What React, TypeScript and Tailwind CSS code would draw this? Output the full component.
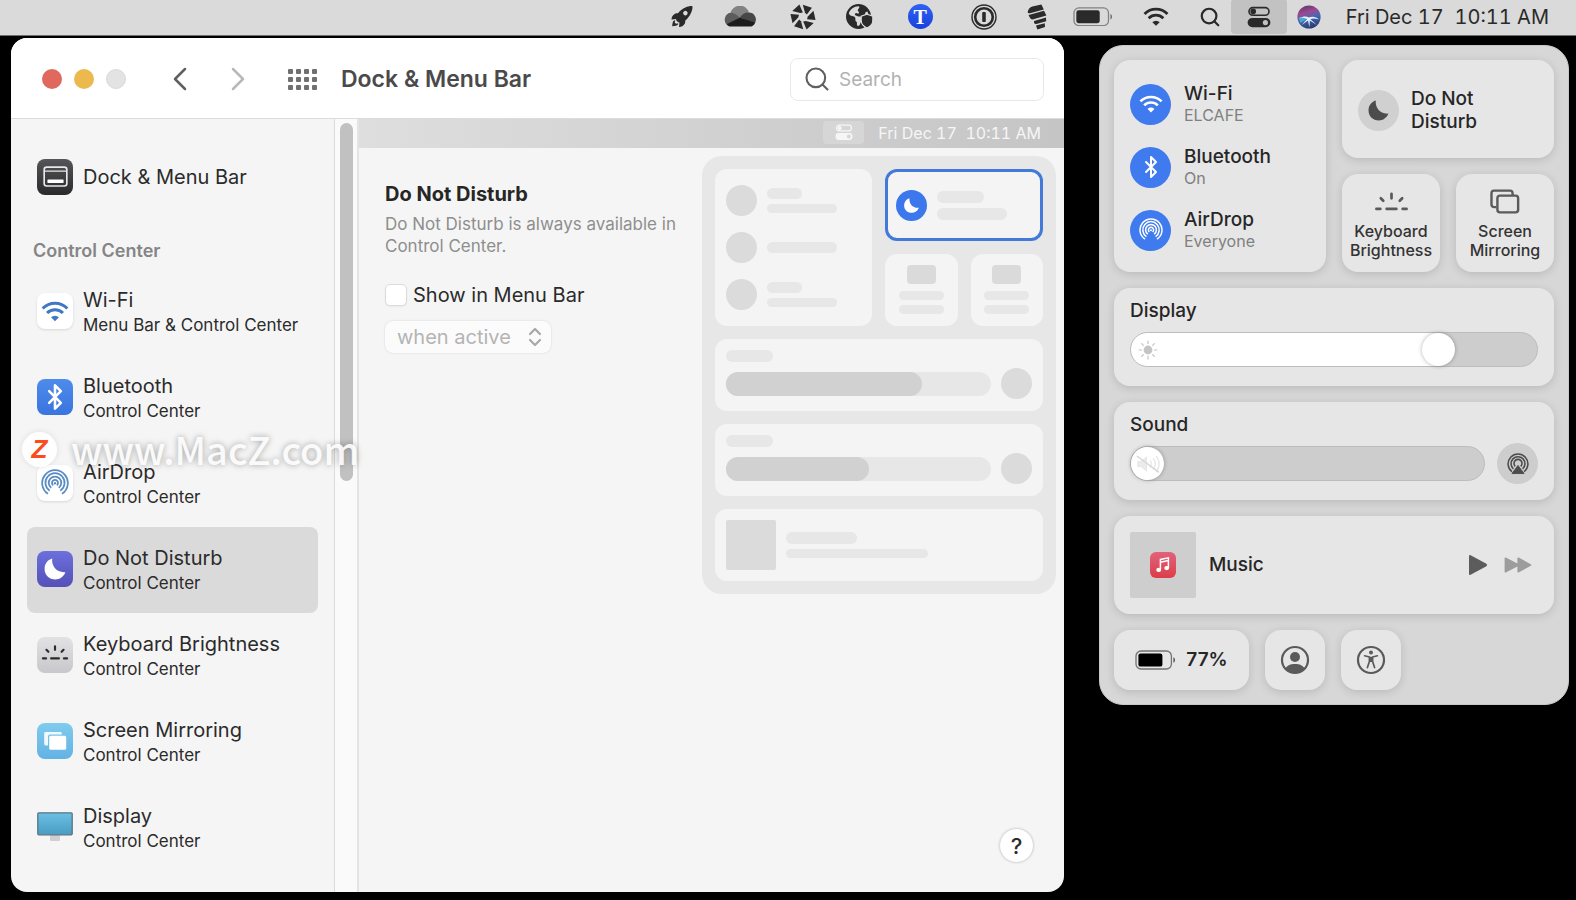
import { type ReactNode, useId, useState } from "react";
import { Bluetooth, ChevronLeft, ChevronRight, ChevronsUpDown, Search } from "lucide-react";
import { FaEarthAmericas } from "react-icons/fa6";
import { IoRocketSharp } from "react-icons/io5";
import { clsx } from "clsx";

interface IconProps {
  className?: string;
}

function WifiIcon({ className }: IconProps) {
  return (
    <svg viewBox="0 0 24 18" className={className} fill="none" stroke="currentColor" strokeWidth="2.6">
      <path d="M1.4 6.4A15 15 0 0 1 22.6 6.4" />
      <path d="M5.2 10.3A9.6 9.6 0 0 1 18.8 10.3" />
      <path d="M12 17.4L8.6 14A4.8 4.8 0 0 1 15.4 14Z" fill="currentColor" stroke="none" />
    </svg>
  );
}

function AirDropIcon({ className }: IconProps) {
  return (
    <svg viewBox="0 0 24 24" className={className} fill="none" stroke="currentColor" strokeWidth="1.5">
      <path d="M6 21.2A11 11 0 1 1 18 21.2" />
      <path d="M7.4 18.6A8.2 8.2 0 1 1 16.6 18.6" />
      <path d="M8.8 16.2A5.4 5.4 0 1 1 15.2 16.2" />
      <path d="M10.4 14A2.6 2.6 0 1 1 13.6 14" />
      <circle cx="12" cy="12.2" r="1" fill="currentColor" stroke="none" />
    </svg>
  );
}

function AirPlayIcon({ className }: IconProps) {
  return (
    <svg viewBox="0 0 24 24" className={className} fill="none" stroke="currentColor" strokeWidth="1.7">
      <path d="M5.4 20.4A10.8 10.8 0 1 1 18.6 20.4" />
      <path d="M7 17.4A7.6 7.6 0 1 1 17 17.4" />
      <path d="M9 14.6A4.4 4.4 0 1 1 15 14.6" />
      <path d="M12 13.6L18.6 22.4H5.4Z" fill="currentColor" strokeLinejoin="round" strokeWidth="1" />
    </svg>
  );
}

function MoonIcon({ className }: IconProps) {
  return (
    <svg viewBox="0 0 24 24" className={className} fill="currentColor">
      <path d="M9.2 1.6C8.2 8.8 13.6 16 22.4 15.2C20.6 19.8 16.8 22.4 12.3 22.4C6.2 22.4 1.6 17.8 1.6 11.9C1.6 7 4.5 3 9.2 1.6Z" />
    </svg>
  );
}

function KeyboardLightIcon({ className }: IconProps) {
  return (
    <svg viewBox="0 0 36 22" className={className} stroke="currentColor" strokeWidth="2.8" strokeLinecap="round">
      <path d="M2.5 18.5H6.5M13 18.5H23M29.5 18.5H33.5M18 3V7.5M7 7.5L9.5 10M29 7.5L26.5 10" />
    </svg>
  );
}

function MirrorIcon({ className }: IconProps) {
  return (
    <svg viewBox="0 0 32 27" className={className} fill="none" stroke="currentColor" strokeWidth="2.6">
      <path d="M7 19.6H4.4A2.8 2.8 0 0 1 1.6 16.8V4.6A2.8 2.8 0 0 1 4.4 1.8H21.6A2.8 2.8 0 0 1 24.4 4.6V6.6" />
      <rect x="8" y="7.2" width="22.4" height="18" rx="2.8" />
    </svg>
  );
}

function TogglesIcon({ className }: IconProps) {
  return (
    <svg viewBox="0 0 24 22" className={className}>
      <rect x="2" y="1.6" width="20" height="7.6" rx="3.8" fill="none" stroke="currentColor" strokeWidth="1.6" />
      <circle cx="6.2" cy="5.4" r="2.8" fill="currentColor" />
      <path
        d="M5.2 12H18.8A4.6 4.6 0 0 1 18.8 21.2H5.2A4.6 4.6 0 0 1 5.2 12ZM18.4 14A2.6 2.6 0 1 0 18.4 19.2A2.6 2.6 0 0 0 18.4 14Z"
        fill="currentColor"
        fillRule="evenodd"
      />
    </svg>
  );
}

function BatteryIcon({ className }: IconProps) {
  return (
    <svg viewBox="0 0 41 20" className={className}>
      <rect x="1" y="1" width="35.4" height="18" rx="5" fill="none" stroke="currentColor" strokeOpacity="0.5" strokeWidth="1.3" />
      <rect x="3.4" y="3.4" width="24" height="13.2" rx="2.2" fill="currentColor" />
      <path d="M38.4 7.2C40.6 8 40.6 12 38.4 12.8Z" fill="currentColor" fillOpacity="0.6" />
    </svg>
  );
}

function CloudIcon({ className }: IconProps) {
  return (
    <svg viewBox="0 0 32 21" className={className}>
      <path d="M6.5 6.8A9.6 9.6 0 0 1 25 6.6C21 7 18.6 9.6 15.6 11.4C12 8.6 9.4 7.4 6.5 6.8Z" fill="#828282" />
      <path d="M6.4 6.8C10.8 6.8 13.2 9.4 16 11.6L3 18.8A7 7 0 0 1 6.4 6.8Z" fill="#5c5c5c" />
      <path d="M24.6 6.6A7 7 0 0 1 31 17C27 15 21 13.6 15.6 11.4C18.6 8.4 21 6.4 24.6 6.6Z" fill="#474747" />
      <path d="M2.6 18.2L15.8 11.4L31.2 16.4C30.4 19 28.4 20.6 25.4 20.6H7C5.2 20.6 3.6 19.8 2.6 18.2Z" fill="#1c1c1c" />
    </svg>
  );
}

function PinwheelIcon({ className }: IconProps) {
  return (
    <svg viewBox="0 0 26 26" className={className} fill="currentColor">
      {[20, 80, 140, 200, 260, 320].map((angle) => (
        <path key={angle} d="M8.6 1.6L18.2 1.2L15.8 9.4L13.4 8.2Z" transform={`rotate(${angle} 13 13)`} />
      ))}
    </svg>
  );
}

function GlobeShieldIcon({ className }: IconProps) {
  return (
    <span className={clsx("relative", className)}>
      <FaEarthAmericas className="size-[25px]" />
      <svg viewBox="0 0 14 16" className="absolute right-0 bottom-0 h-4 w-[14px]">
        <path
          d="M7 1.2L12.8 3.2V7.6C12.8 11 10.4 13.6 7 15C3.6 13.6 1.2 11 1.2 7.6V3.2Z"
          fill="#2a2a2a"
          stroke="#dadada"
          strokeWidth="1.2"
        />
      </svg>
    </span>
  );
}

function KeyholeIcon({ className }: IconProps) {
  return (
    <svg viewBox="0 0 26 26" className={className} fill="none" stroke="currentColor">
      <circle cx="13" cy="13" r="12" strokeWidth="1.4" />
      <circle cx="13" cy="13" r="8.8" strokeWidth="2.6" />
      <rect x="11.2" y="8" width="3.6" height="10" rx="1" fill="currentColor" stroke="none" />
    </svg>
  );
}

function StripesIcon({ className }: IconProps) {
  return (
    <svg viewBox="0 0 20 26" className={className} fill="currentColor">
      <path d="M0.6 8.2Q1.4 3.4 5.4 2.4L14.4 0.4L16.8 5.4L3 9.2Q1 9.6 0.6 8.2Z" />
      <path d="M1.6 11L17 6.8L19.4 11.6L5.6 15.6Q3.4 15.8 1.6 11Z" />
      <path d="M7 17L19 13.4L19.2 17.2L9.4 20Q6.6 20.4 7 17Z" />
      <path d="M9 21.6L17.8 19.2L18 23L10.4 25.4Z" />
    </svg>
  );
}

function SiriIcon({ className }: IconProps) {
  const id = useId();
  return (
    <svg viewBox="0 0 24 24" className={className}>
      <defs>
        <linearGradient id={id} x1="0.3" y1="0" x2="0.6" y2="1">
          <stop offset="0" stopColor="#5a3a78" />
          <stop offset="0.3" stopColor="#a0488c" />
          <stop offset="0.55" stopColor="#4668b4" />
          <stop offset="1" stopColor="#28386c" />
        </linearGradient>
      </defs>
      <circle cx="12" cy="12" r="11.6" fill={`url(#${id})`} />
      <path d="M2 13.4C6 11.4 9 11 12 12.6C15 11 19 11.6 22 14.4C18 13.4 15 13.4 13.4 14.2L20 20L12.8 15.4L12.4 22.6L11 15.6L4.6 20L10.2 14C8 13 5 13 2 13.4Z" fill="#e6f2ff" />
      <path d="M1.6 13C4 12 7 12.6 9.8 14.2L3.6 18Z" fill="#4ab8d8" opacity="0.8" />
    </svg>
  );
}

function DockTileIcon() {
  return (
    <svg viewBox="0 0 26 22" className="w-[25px]" fill="none">
      <rect x="1.2" y="1.2" width="23.6" height="19.6" rx="2.6" stroke="#e8e8e8" strokeWidth="1.7" />
      <path d="M2 5.4H24" stroke="#e8e8e8" strokeWidth="1.4" />
      <rect x="4.6" y="14" width="16.8" height="3.8" rx="0.6" fill="#fff" />
    </svg>
  );
}

function DisplayTileIcon() {
  const id = useId();
  return (
    <svg viewBox="0 0 36 36" className="size-9">
      <defs>
        <linearGradient id={id} x1="0" y1="0" x2="0" y2="1">
          <stop offset="0" stopColor="#6cc0e4" />
          <stop offset="1" stopColor="#4a9cc2" />
        </linearGradient>
      </defs>
      <rect x="13" y="26" width="10" height="6" rx="1" fill="#cfcfcf" />
      <rect x="0.8" y="3.8" width="34.4" height="22" rx="1" fill={`url(#${id})`} stroke="#5b7480" strokeWidth="1.3" />
    </svg>
  );
}

interface SidebarEntry {
  name: string;
  where?: string;
  tile: string;
  icon: ReactNode;
}

const DOCK_ENTRY: SidebarEntry = {
  name: "Dock & Menu Bar",
  tile: "bg-linear-to-b from-[#56565a] to-[#2a2a2c]",
  icon: <DockTileIcon />,
};

const MODULES: SidebarEntry[] = [
  {
    name: "Wi-Fi",
    where: "Menu Bar & Control Center",
    tile: "bg-white shadow-sm text-[#4078c4]",
    icon: <WifiIcon className="w-7" />,
  },
  {
    name: "Bluetooth",
    where: "Control Center",
    tile: "bg-linear-to-b from-[#4f8bea] to-[#3a74e0] text-white",
    icon: <Bluetooth className="size-7" strokeWidth={2.2} />,
  },
  {
    name: "AirDrop",
    where: "Control Center",
    tile: "bg-white shadow-sm text-[#5a8cc4]",
    icon: <AirDropIcon className="size-7" />,
  },
  {
    name: "Do Not Disturb",
    where: "Control Center",
    tile: "bg-linear-to-b from-[#6c70dc] to-[#5450b8] text-white",
    icon: <MoonIcon className="size-6" />,
  },
  {
    name: "Keyboard Brightness",
    where: "Control Center",
    tile: "bg-linear-to-b from-[#e2e2e4] to-[#c8c8cc] text-[#2c2c2c]",
    icon: <KeyboardLightIcon className="mb-1 w-7" />,
  },
  {
    name: "Screen Mirroring",
    where: "Control Center",
    tile: "bg-linear-to-b from-[#80ccee] to-[#62b2e4] text-white",
    icon: (
      <svg viewBox="0 0 24 20" className="w-6">
        <path d="M5 14.4H2.6A1.4 1.4 0 0 1 1.2 13V2.4A1.4 1.4 0 0 1 2.6 1H17.4A1.4 1.4 0 0 1 18.8 2.4V3.4H7A2 2 0 0 0 5 5.4Z" fill="#fff" fillOpacity="0.9" />
        <rect x="6.2" y="4.8" width="17" height="14" rx="1.6" fill="#fff" />
      </svg>
    ),
  },
  { name: "Display", where: "Control Center", tile: "", icon: <DisplayTileIcon /> },
];

const CARD = "rounded-2xl bg-[#e6e6e6] shadow-[0_2px_10px_rgba(0,0,0,0.14)]";

function SidebarRow({ entry, selected }: { entry: SidebarEntry; selected?: boolean }) {
  return (
    <button
      type="button"
      className={clsx(
        "flex h-[86px] w-full items-center gap-[10px] rounded-lg pt-0.5 pl-[10px] text-left text-[#2b2b2b]",
        selected && "bg-[#dadada]",
      )}
    >
      <span
        className={clsx(
          "flex size-9 shrink-0 items-center justify-center rounded-lg",
          entry.where && "mb-1",
          entry.tile,
        )}
      >
        {entry.icon}
      </span>
      <span className="flex flex-col whitespace-nowrap">
        <span className="text-[20px] leading-[25px]">{entry.name}</span>
        {entry.where && <span className="text-[17px] leading-[25px]">{entry.where}</span>}
      </span>
    </button>
  );
}

function MenuBar() {
  return (
    <header className="flex h-9 items-center justify-end border-b border-[#6e6e6e] bg-[#dadada] pr-[27px] pb-0.5 text-[#2a2a2a]">
      <IoRocketSharp className="h-[25px] w-6" />
      <CloudIcon className="ml-[30px] w-8" />
      <PinwheelIcon className="ml-[34px] size-[26px]" />
      <GlobeShieldIcon className="ml-[30px] w-7" />
      <span className="ml-[34px] flex size-[25px] items-center justify-center rounded-full bg-linear-to-b from-[#2f62f4] to-[#1a40dc] font-['Liberation_Serif'] text-[20px] leading-none font-bold text-white">
        T
      </span>
      <KeyholeIcon className="ml-[38px] size-[26px]" />
      <StripesIcon className="ml-[30px] w-5" />
      <BatteryIcon className="ml-[26px] w-10" />
      <WifiIcon className="ml-[30px] w-[26px]" />
      <Search className="ml-[30px] size-[22px]" strokeWidth={2.4} />
      <button type="button" aria-label="Control Center" className="ml-[10px] flex h-[35px] w-14 items-center justify-center rounded bg-[#c2c2c2]">
        <TogglesIcon className="w-6" />
      </button>
      <SiriIcon className="ml-[10px] size-6" />
      <span className="ml-[25px] text-[20px] whitespace-pre tabular-nums">Fri Dec 17  10:11 AM</span>
    </header>
  );
}

function TitleBar() {
  return (
    <div className="flex h-[81px] items-center border-b border-[#dcdcdc] bg-white pt-0.5 pr-5 pl-[31px]">
      <div className="flex gap-3">
        <button type="button" aria-label="Close" className="size-5 rounded-full bg-[#e0695d]" />
        <button type="button" aria-label="Minimize" className="size-5 rounded-full bg-[#ecb94e]" />
        <button type="button" aria-label="Zoom" className="size-5 rounded-full border border-[#dadada] bg-[#e3e3e3]" />
      </div>
      <button type="button" aria-label="Back" className="ml-[34px] text-[#606060]">
        <ChevronLeft className="size-10" strokeWidth={1.5} />
      </button>
      <button type="button" aria-label="Forward" className="ml-[18px] text-[#b8b8b8]">
        <ChevronRight className="size-10" strokeWidth={1.5} />
      </button>
      <button type="button" aria-label="Show All" className="ml-[30px] grid grid-cols-4 gap-[3px]">
        {Array.from({ length: 12 }, (_, i) => (
          <span key={i} className="size-[5px] rounded-[1px] bg-[#707070]" />
        ))}
      </button>
      <h1 className="ml-6 text-[23px] font-semibold whitespace-nowrap text-[#4a4a4a]">Dock &amp; Menu Bar</h1>
      <div className="ml-auto flex h-[43px] w-[254px] items-center gap-2 rounded-lg border border-[#e8e8e8] px-3 text-[#606060]">
        <Search className="size-7 shrink-0" strokeWidth={1.8} />
        <input
          type="search"
          aria-label="Search"
          placeholder="Search"
          className="h-full w-full min-w-0 bg-transparent text-[19px] outline-none placeholder:text-[#b2b2b2]"
        />
      </div>
    </div>
  );
}

function Sidebar() {
  return (
    <>
      <nav className="w-[323px] shrink-0 px-4 pt-[14px]">
        <SidebarRow entry={DOCK_ENTRY} />
        <h2 className="flex h-[50px] items-center pt-3 pl-[6px] text-[18px] font-semibold text-[#858585]">Control Center</h2>
        {MODULES.map((entry) => (
          <SidebarRow key={entry.name} entry={entry} selected={entry.name === "Do Not Disturb"} />
        ))}
      </nav>
      <div className="w-[25px] shrink-0 border-r-2 border-l border-r-[#e4e4e4] border-l-[#dcdcdc] bg-[#fafafa] pt-1 pl-[5px]">
        <div className="h-[358px] w-[13px] rounded-full bg-[#c1c1c1]" />
      </div>
    </>
  );
}

/* Placeholder line inside the layout preview */
function Bar({ className }: IconProps) {
  return <div className={clsx("rounded-full bg-[#e7e7e7]", className)} />;
}

function PreviewSlider({ level }: { level: number }) {
  return (
    <div className="h-[72px] rounded-xl bg-[#f4f4f4] px-[11px] pt-[11px]">
      <Bar className="h-3 w-[47px]" />
      <div className="mt-[6px] flex items-center gap-[10px]">
        <div className="h-6 flex-1 rounded-full bg-[#e7e7e7]">
          <div className="h-full rounded-full bg-[#d1d1d1]" style={{ width: `${level}%` }} />
        </div>
        <div className="size-[31px] rounded-full bg-[#dbdbdb]" />
      </div>
    </div>
  );
}

function PreviewTile() {
  return (
    <div className="flex h-[72px] flex-1 flex-col items-center rounded-xl bg-[#f4f4f4] pt-[11px]">
      <div className="h-[19px] w-[29px] rounded bg-[#dadada]" />
      <Bar className="mt-[7px] h-[9px] w-[45px]" />
      <Bar className="mt-[5px] h-[9px] w-[45px]" />
    </div>
  );
}

function LayoutPreview() {
  return (
    <div className="flex w-[354px] shrink-0 flex-col gap-[13px] rounded-[20px] bg-[#e7e7e7] p-[13px]">
      <div className="flex gap-[13px]">
        <div className="flex flex-1 flex-col justify-center gap-4 rounded-xl bg-[#f4f4f4] pl-[11px]">
          {[true, false, true].map((twoLines, i) => (
            <div key={i} className="flex items-center gap-[10px]">
              <div className="size-[31px] rounded-full bg-[#dbdbdb]" />
              <div className="flex flex-col gap-[5px]">
                {twoLines && <Bar className="h-[11px] w-[35px]" />}
                <Bar className={clsx("w-[70px]", twoLines ? "h-[9px]" : "h-[11px]")} />
              </div>
            </div>
          ))}
        </div>
        <div className="flex w-[158px] flex-col gap-[13px]">
          <div className="flex h-[72px] items-center gap-[10px] rounded-xl border-3 border-[#4379d8] bg-[#f4f4f4] pl-2">
            <div className="flex size-[31px] items-center justify-center rounded-full bg-[#3c78ec] text-white">
              <MoonIcon className="size-[17px]" />
            </div>
            <div className="flex flex-col gap-[5px]">
              <Bar className="h-3 w-[47px]" />
              <Bar className="h-3 w-[70px]" />
            </div>
          </div>
          <div className="flex gap-[13px]">
            <PreviewTile />
            <PreviewTile />
          </div>
        </div>
      </div>
      <PreviewSlider level={74} />
      <PreviewSlider level={54} />
      <div className="flex h-[72px] items-center gap-[10px] rounded-xl bg-[#f4f4f4] pl-[11px]">
        <div className="size-[50px] rounded-xs bg-[#dbdbdb]" />
        <div className="flex flex-col gap-[5px]">
          <Bar className="h-3 w-[71px]" />
          <Bar className="h-[9px] w-[142px]" />
        </div>
      </div>
    </div>
  );
}

function DetailPane() {
  return (
    <section className="flex min-w-0 flex-1 flex-col">
      <div className="flex h-[29px] items-center justify-end bg-linear-to-r from-[#dedede] to-[#c5c5c5] pr-[23px] pb-0.5 text-[#f6f6f6]">
        <span className="flex h-[23px] w-[41px] items-center justify-center rounded bg-[#d6d6d6]">
          <TogglesIcon className="w-[18px]" />
        </span>
        <span className="ml-[14px] text-[16px] whitespace-pre tabular-nums">Fri Dec 17  10:11 AM</span>
      </div>
      <div className="flex flex-1 justify-between pt-2 pr-2 pl-[26px]">
        <div className="pt-[25px]">
          <h2 className="text-[20px] leading-[26px] font-bold text-[#262626]">Do Not Disturb</h2>
          <p className="mt-[6px] max-w-[310px] text-[17px] leading-[22px] text-[#8e8e8e]">
            Do Not Disturb is always available in Control Center.
          </p>
          <label className="mt-[26px] flex items-center gap-[6px] text-[20px] leading-6 text-[#2b2b2b]">
            <input
              type="checkbox"
              className="size-[22px] appearance-none rounded-[5px] border border-[#dcdcdc] bg-white shadow-xs checked:bg-[#3c78ec]"
            />
            Show in Menu Bar
          </label>
          <div className="relative mt-[14px] w-[166px]">
            <select
              disabled
              aria-label="Show in menu bar"
              className="h-8 w-full appearance-none rounded-lg bg-[#fbfbfb] pl-3 text-[20px] leading-6 text-[#b4b4b4] opacity-100 shadow-[0_0_2px_rgba(0,0,0,0.16)]"
            >
              <option>when active</option>
              <option>always</option>
            </select>
            <ChevronsUpDown className="pointer-events-none absolute top-1 right-1 size-6 text-[#a8a8a8]" strokeWidth={2.2} />
          </div>
        </div>
        <div>
          <LayoutPreview />
        </div>
      </div>
      <div className="flex justify-end pr-[31px] pb-[30px]">
        <button type="button" aria-label="Help" className="size-[33px] rounded-full bg-white text-[22px] leading-none font-medium text-[#2b2b2b] shadow-[0_0_3px_rgba(0,0,0,0.3)]">
          ?
        </button>
      </div>
    </section>
  );
}

function Toggle({ name, status, children }: { name: string; status: string; children: ReactNode }) {
  return (
    <button type="button" className="flex items-center gap-[13px] text-left">
      <span className="flex size-[41px] items-center justify-center rounded-full bg-[#3f7bee] text-white">{children}</span>
      <span className="flex flex-col">
        <span className="text-[19px] leading-[22px] font-medium text-[#262626]">{name}</span>
        <span className="text-[16px] leading-[20px] text-[#808080]">{status}</span>
      </span>
    </button>
  );
}

function LevelSlider({ label, initial, children }: { label: string; initial: number; children: ReactNode }) {
  const [level, setLevel] = useState(initial);
  // the fill ends under the middle of the 33px knob
  const stop = `calc(${level}% + ${17 - level * 0.33}px)`;
  return (
    <div className="relative flex flex-1">
      <input
        type="range"
        aria-label={label}
        value={level}
        onChange={(e) => setLevel(Number(e.target.value))}
        className="h-[35px] w-full appearance-none rounded-full border border-[#bcbcbc] [&::-webkit-slider-thumb]:size-[33px] [&::-webkit-slider-thumb]:appearance-none [&::-webkit-slider-thumb]:rounded-full [&::-webkit-slider-thumb]:bg-white [&::-webkit-slider-thumb]:shadow-[0_0_4px_rgba(0,0,0,0.3)]"
        style={{ background: `linear-gradient(to right, #fff ${stop}, #cdcdcd ${stop})` }}
      />
      <span className="pointer-events-none absolute inset-y-0 left-0 flex w-[35px] items-center justify-center">
        {children}
      </span>
    </div>
  );
}

function ControlCenter() {
  return (
    <aside className="mt-[9px] mr-[7px] flex w-[470px] shrink-0 flex-col gap-4 self-start rounded-3xl border border-[#c8c8c8] bg-[#d7d7d7] p-[14px] text-[#262626]">
      <div className="grid grid-cols-2 gap-4">
        <div className={clsx(CARD, "flex flex-col justify-center gap-[21px] pt-0.5 pl-4")}>
          <Toggle name="Wi-Fi" status="ELCAFE">
            <WifiIcon className="w-6" />
          </Toggle>
          <Toggle name="Bluetooth" status="On">
            <Bluetooth className="size-6" strokeWidth={2} />
          </Toggle>
          <Toggle name="AirDrop" status="Everyone">
            <AirDropIcon className="size-6" />
          </Toggle>
        </div>
        <div className="flex flex-col gap-4">
          <button type="button" className={clsx(CARD, "flex h-[98px] items-center gap-3 pt-0.5 pl-4 text-left")}>
            <span className="flex size-[41px] items-center justify-center rounded-full bg-[#d0d0d0] text-[#4c4c4c]">
              <MoonIcon className="size-[23px]" />
            </span>
            <span className="w-24 text-[19px] leading-[23px] font-medium">Do Not Disturb</span>
          </button>
          <div className="grid grid-cols-2 gap-4">
            <button type="button" className={clsx(CARD, "flex h-[98px] flex-col items-center pt-[15px] text-[#5a5a5a]")}>
              <span className="flex h-[25px] items-center">
                <KeyboardLightIcon className="w-[35px]" />
              </span>
              <span className="mt-2 text-[16px] leading-[19px] font-medium text-[#333]">
                Keyboard
                <br />
                Brightness
              </span>
            </button>
            <button type="button" className={clsx(CARD, "flex h-[98px] flex-col items-center pt-[15px] text-[#5a5a5a]")}>
              <MirrorIcon className="h-[25px]" />
              <span className="mt-2 text-[16px] leading-[19px] font-medium text-[#333]">
                Screen
                <br />
                Mirroring
              </span>
            </button>
          </div>
        </div>
      </div>
      <div className={clsx(CARD, "h-[98px] px-4 pt-3")}>
        <h3 className="text-[19px] leading-[22px] font-medium">Display</h3>
        <div className="mt-[7px] flex h-[41px] items-center">
          <LevelSlider label="Display" initial={78}>
            <svg viewBox="0 0 20 20" className="size-5 text-[#c4c4c4]" stroke="currentColor" strokeWidth="1.2" strokeLinecap="round">
              <circle cx="10" cy="10" r="3.8" fill="currentColor" />
              <path d="M10 1V3.6M10 16.4V19M1 10H3.6M16.4 10H19M3.6 3.6L5.4 5.4M14.6 14.6L16.4 16.4M3.6 16.4L5.4 14.6M14.6 5.4L16.4 3.6" />
            </svg>
          </LevelSlider>
        </div>
      </div>
      <div className={clsx(CARD, "h-[98px] px-4 pt-3")}>
        <h3 className="text-[19px] leading-[22px] font-medium">Sound</h3>
        <div className="mt-[7px] flex h-[41px] items-center gap-3">
          <LevelSlider label="Sound" initial={0}>
            <svg viewBox="0 0 24 20" className="w-6" fill="none" stroke="#e8e8e8" strokeWidth="1.4">
              <path d="M2 7.6H5.4L10.4 3.4V16.6L5.4 12.4H2Z" fill="#ebebeb" />
              <path d="M14 6.6A5 5 0 0 1 14 13.4M17 4.2A8.4 8.4 0 0 1 17 15.8M20 2A12 12 0 0 1 20 18" />
              <path d="M1 2L23 18.4" stroke="#d6d6d6" />
            </svg>
          </LevelSlider>
          <button type="button" aria-label="Audio output" className="flex size-[41px] items-center justify-center rounded-full bg-[#cdcdcd] text-[#4c4c4c]">
            <AirPlayIcon className="size-[22px]" />
          </button>
        </div>
      </div>
      <div className={clsx(CARD, "flex h-[98px] items-center px-4")}>
        <div className="flex size-[66px] items-center justify-center rounded-xs bg-[#cecece]">
          <span className="flex size-[26px] items-center justify-center rounded-md bg-linear-to-b from-[#e0627a] to-[#dc3c48]">
            <svg viewBox="0 0 20 20" className="size-5" fill="none" stroke="#fff" strokeWidth="1.5">
              <path d="M7.4 14.6V4.4L15.4 2.8V12.8M7.4 7.2L15.4 5.6" />
              <ellipse cx="5.7" cy="14.9" rx="1.7" ry="1.4" fill="#fff" />
              <ellipse cx="13.7" cy="13.1" rx="1.7" ry="1.4" fill="#fff" />
            </svg>
          </span>
        </div>
        <span className="ml-[13px] flex-1 text-[19px] font-medium">Music</span>
        <button type="button" aria-label="Play">
          <svg viewBox="0 0 20 22" className="h-[22px]" fill="#5c5c5c">
            <path d="M1 2.2Q1 0.4 2.6 1.2L18.4 9.8Q20 11 18.4 12.2L2.6 20.8Q1 21.6 1 19.8Z" />
          </svg>
        </button>
        <button type="button" aria-label="Next" className="mr-[6px] ml-4">
          <svg viewBox="0 0 28 16" className="w-7" fill="#9c9c9c">
            <path d="M0.6 1.4Q0.6 0 1.8 0.6L13.4 6.6V1.4Q13.4 0 14.6 0.6L26.8 7.2Q28 8 26.8 8.8L14.6 15.4Q13.4 16 13.4 14.6V9.4L1.8 15.4Q0.6 16 0.6 14.6Z" />
          </svg>
        </button>
      </div>
      <div className="flex gap-4">
        <button type="button" className={clsx(CARD, "flex h-[60px] w-[135px] items-center justify-center gap-[10px]")}>
          <BatteryIcon className="w-[41px] text-black" />
          <span className="text-[19px] font-semibold">77%</span>
        </button>
        <button type="button" aria-label="Users" className={clsx(CARD, "flex size-[60px] items-center justify-center")}>
          <svg viewBox="0 0 30 30" className="size-[30px]" fill="#5a5a5a">
            <circle cx="15" cy="15" r="13" fill="none" stroke="#5a5a5a" strokeWidth="2.2" />
            <circle cx="15" cy="12" r="5" />
            <path d="M5.6 23.4C7 20.4 10.6 19 15 19S23 20.4 24.4 23.4C22 26.4 18.8 28 15 28S8 26.4 5.6 23.4Z" />
          </svg>
        </button>
        <button type="button" aria-label="Accessibility" className={clsx(CARD, "flex size-[60px] items-center justify-center")}>
          <svg viewBox="0 0 30 30" className="size-[30px]" fill="none" stroke="#5a5a5a" strokeLinecap="round" strokeLinejoin="round">
            <circle cx="15" cy="15" r="13" strokeWidth="2.2" />
            <circle cx="15" cy="7.6" r="2" fill="#5a5a5a" stroke="none" />
            <path d="M8.6 10.8L13.4 12V16.4L11.4 22.6M21.4 10.8L16.6 12V16.4L18.6 22.6" strokeWidth="1.7" />
            <path d="M13.4 11.8H16.6V17H13.4Z" fill="#5a5a5a" stroke="none" />
          </svg>
        </button>
      </div>
    </aside>
  );
}

function Watermark() {
  return (
    <div className="pointer-events-none absolute top-[425px] left-[22px] flex items-center gap-[14px]">
      <span className="flex size-[35px] items-center justify-center rounded-full bg-white/85 font-['Liberation_Sans'] text-[26px] leading-none font-bold text-[#fb4d1c] italic shadow-[0_0_6px_rgba(0,0,0,0.1)]">
        Z
      </span>
      <span className="font-['Noto_Sans_CJK_SC',sans-serif] text-[38px] leading-[48px] font-medium text-white/90 [text-shadow:0_0_6px_rgba(0,0,0,0.35)]">
        www.MacZ.com
      </span>
    </div>
  );
}

export default function App() {
  return (
    <div className="relative flex min-h-screen flex-col bg-black font-['Inter',sans-serif]">
      <MenuBar />
      <div className="flex flex-1">
        <main className="mt-[2px] mr-[35px] mb-2 ml-[11px] flex min-w-0 flex-1 flex-col overflow-hidden rounded-2xl bg-[#f5f5f5]">
          <TitleBar />
          <div className="flex flex-1">
            <Sidebar />
            <DetailPane />
          </div>
        </main>
        <ControlCenter />
      </div>
      <Watermark />
    </div>
  );
}
